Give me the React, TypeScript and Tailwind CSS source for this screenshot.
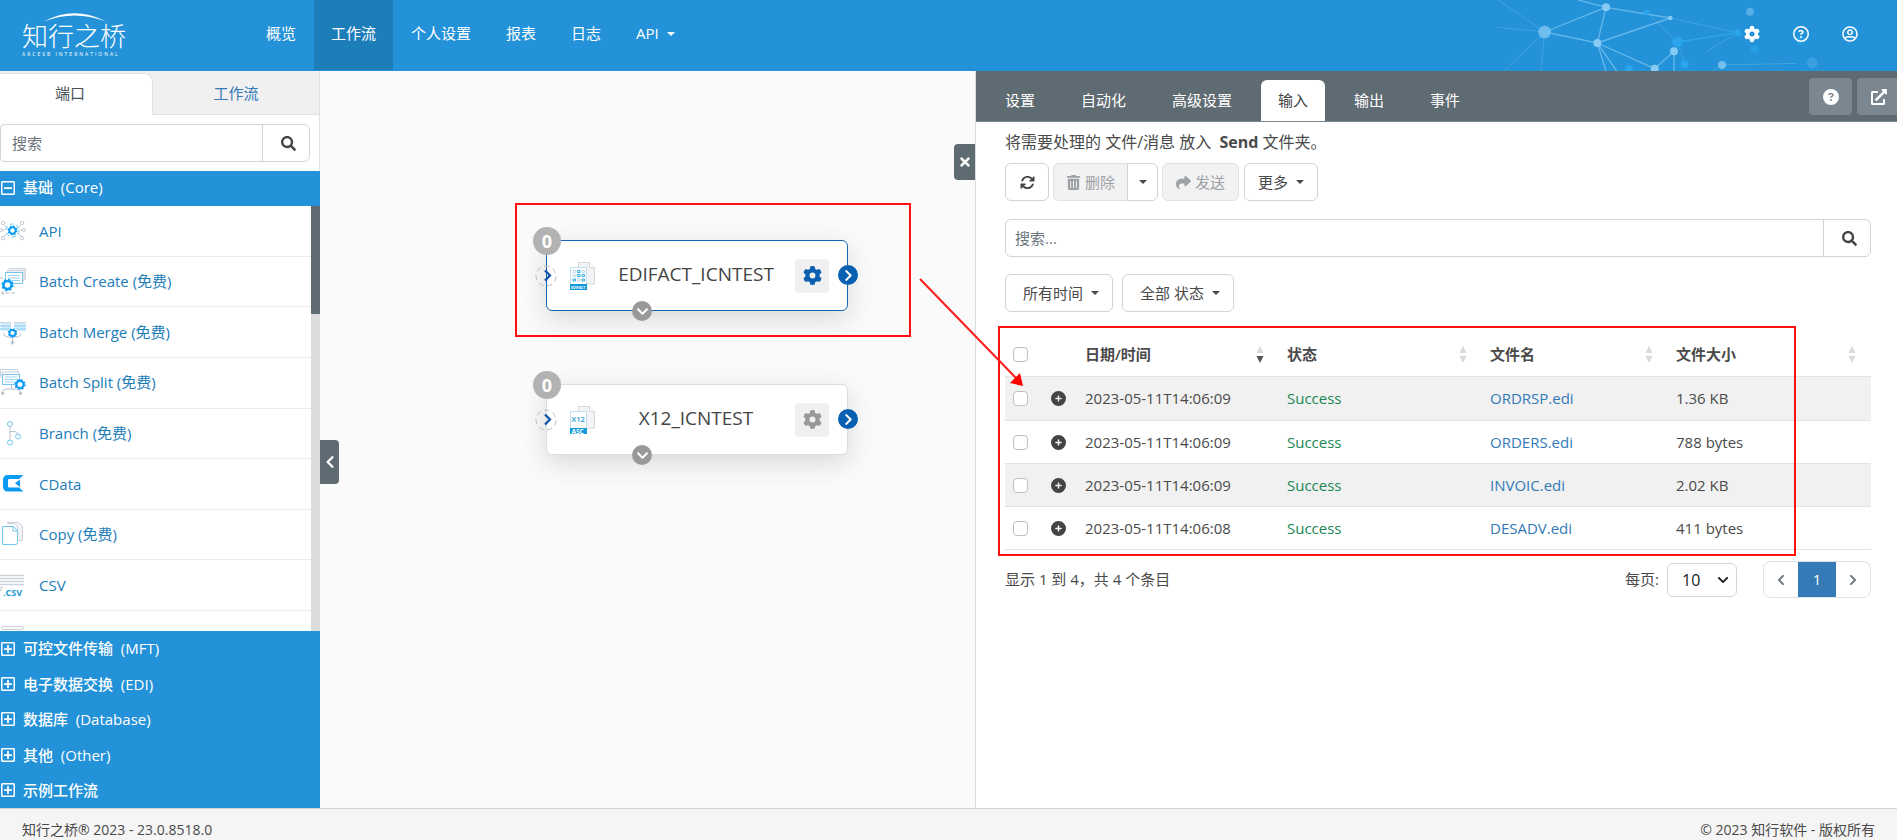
import type { ReactNode } from "react";
import {
    FaChevronDown,
    FaChevronLeft,
    FaChevronRight,
    FaExternalLinkAlt,
    FaRegMinusSquare,
    FaRegPlusSquare,
    FaRegUserCircle,
    FaSearch,
    FaTimes,
    FaTrashAlt,
} from "react-icons/fa";
import { FaArrowsRotate, FaCirclePlus, FaCircleQuestion, FaGear, FaRegCircleQuestion, FaShare } from "react-icons/fa6";

const NAV = ["概览", "工作流", "个人设置", "报表", "日志"];
const TABS = ["设置", "自动化", "高级设置", "输入", "输出", "事件"];
const GROUPS = ["可控文件传输 (MFT)", "电子数据交换 (EDI)", "数据库 (Database)", "其他 (Other)", "示例工作流"];

const FILES = [
    { time: "2023-05-11T14:06:09", status: "Success", name: "ORDRSP.edi", size: "1.36 KB" },
    { time: "2023-05-11T14:06:09", status: "Success", name: "ORDERS.edi", size: "788 bytes" },
    { time: "2023-05-11T14:06:09", status: "Success", name: "INVOIC.edi", size: "2.02 KB" },
    { time: "2023-05-11T14:06:08", status: "Success", name: "DESADV.edi", size: "411 bytes" },
];

// Small cog used inside the port icons
function Cog({ x, y, r }: { x: number; y: number; r: number }) {
    return (
        <g stroke="#0a9bf5" fill="none">
            <circle cx={x} cy={y} r={r} fill="#fff" strokeWidth={r * 0.6} />
            <circle cx={x} cy={y} r={r * 1.35} strokeWidth={r * 0.4} strokeDasharray={`${r * 0.53} ${r * 0.53}`} />
        </g>
    );
}

const PORTS: { name: string; icon: ReactNode }[] = [
    {
        name: "API",
        icon: (
            <>
                <g stroke="#c3ccd6" fill="none">
                    <circle cx="3" cy="6" r="1.7" />
                    <circle cx="22" cy="6" r="1.7" />
                    <circle cx="1" cy="13" r="1.5" />
                    <circle cx="24" cy="13" r="1.5" />
                    <circle cx="3" cy="21" r="1.7" />
                    <circle cx="22" cy="21" r="1.7" />
                    <path d="M4 7.5 6 10M21 7.5 19 10M2.5 13H5M22.500 13H20M4 19.500 6 17M21 19.500 19 17" />
                </g>
                <circle cx="12.500" cy="13.500" r="6.500" fill="none" stroke="#5cc3f5" strokeDasharray="4 2.800" />
                <Cog x={12.5} y={13.5} r={3.2} />
            </>
        ),
    },
    {
        name: "Batch Create (免费)",
        icon: (
            <>
                <path d="M9 1.500V0.500H25.500V11H24M7.500 4V2.500H24V12.500H22.500" fill="#f1f3f5" stroke="#ccd3db" />
                <rect x="5.500" y="4.500" width="17" height="11" fill="#fff" stroke="#7cc4ef" />
                <path d="M8 7.500h12M8 10h12M10 12.500h10" stroke="#9cd4f7" />
                <path d="M0 10h3M5 25h11M1 25h3M3 23v4" stroke="#b6c0cb" strokeDasharray="4 2" />
                <Cog x={7.5} y={17} r={4} />
            </>
        ),
    },
    {
        name: "Batch Merge (免费)",
        icon: (
            <>
                <path d="M1 4h10v8H1zM14 4h12v8H14z" fill="#d3ecfb" />
                <path d="M0 3.500h10.500v2M14.500 5.500v-2H26" fill="none" stroke="#ccd3db" />
                <path d="M0 7h11M14 7h12M0 10h9M17 10h9" stroke="#a4d8f8" strokeWidth="1.500" />
                <path d="M4 14q0 4 5 4h7q5 0 5-4M12.500 18v6" fill="none" stroke="#b6c0cb" />
                <path d="M10.500 22.500h4l-2 3.500z" fill="#a9b4c0" />
                <Cog x={12.5} y={14} r={3} />
            </>
        ),
    },
    {
        name: "Batch Split (免费)",
        icon: (
            <>
                <path d="M.5 8V.5h17V3M2 9V3h17v2" fill="none" stroke="#ccd3db" />
                <rect x="2.500" y="5.500" width="17" height="10" fill="#fff" stroke="#7cc4ef" />
                <path d="M5 8h12M5 10.500h12M5 13h10" stroke="#9cd4f7" />
                <path d="M11.500 16v4M2.500 24q0-4 5-4h8q5 0 5 4" fill="none" stroke="#b6c0cb" />
                <path d="M.7 23.500h4l-2 3zM18.500 23.500h4l-2 3z" fill="#a9b4c0" />
                <Cog x={20} y={15.5} r={3.6} />
            </>
        ),
    },
    {
        name: "Branch (免费)",
        icon: (
            <g fill="none">
                <g stroke="#6fc6ee">
                    <circle cx="10" cy="4" r="2.500" />
                    <circle cx="10" cy="22.500" r="2.500" />
                    <circle cx="18" cy="16.500" r="2.500" />
                </g>
                <path d="M10 6.500V20M10 11.500h4q3.500 0 3.500 2.500" stroke="#b6c0cb" />
            </g>
        ),
    },
    {
        name: "CData",
        icon: (
            <>
                <path d="M23.500 5H7.500C4.500 5 3 7 3 10v6c0 3 1.500 5.500 4.500 5.500h16L19 17.500H9.500c-1 0-1.500-.5-1.500-1.500v-5.500c0-1 .5-1.500 1.500-1.500H19z" fill="#0a9bf5" />
                <path d="M20 9.500v7.500l-5-3.700z" fill="#0a9bf5" />
            </>
        ),
    },
    {
        name: "Copy (免费)",
        icon: (
            <>
                <path d="M7.500 1.500h11l4 4v14h-5v-14l-3-3h-7z" fill="#f1f3f5" stroke="#ccd3db" />
                <path d="M2.500 5.500h11l4 4v12q0 2-2 2h-13z" fill="#fff" stroke="#6fc6ee" />
                <path d="M13 5.500V10h4.500" fill="none" stroke="#6fc6ee" />
            </>
        ),
    },
    {
        name: "CSV",
        icon: (
            <>
                <path d="M0 3.500h24M0 6.500h24M0 9.500h24M0 12.500h24M0 15.500h3M0 18h2" stroke="#ccd3db" strokeWidth="1.500" />
                <text x="3" y="23.500" fontSize="9" fontWeight="700" fill="#1c9ad6">.CSV</text>
            </>
        ),
    },
];

function Caret() {
    return <span className="inline-block border-x-4 border-t-4 border-x-transparent border-t-current" />;
}

function SortArrows({ down = false }: { down?: boolean }) {
    return (
        <svg width="8" height="17" viewBox="0 0 8 17">
            <path d="M4 0 7.500 7h-7z" fill="#dadada" />
            <path d="M4 17 7.500 10h-7z" fill={down ? "#555" : "#dadada"} />
        </svg>
    );
}

// Network pattern on the right end of the header
function HeaderArt() {
    return (
        <svg className="pointer-events-none absolute right-0 top-0" width="447" height="71" viewBox="0 0 1341 213">
            <g stroke="#8fd0f7" strokeWidth="4" fill="none" opacity=".6">
                <path d="M284 96 468 22 442 129 284 96M442 129 614 206 672 154V213M442 129 661 54 468 22 385 0M442 129 468 213M442 129 500 213" />
            </g>
            <g stroke="#6dbdee" strokeWidth="3" fill="none" opacity=".4">
                <path d="M284 96 145 0M284 96 142 82M284 96 162 213M284 96 273 213M661 54 862 98 770 155M816 195 1040 190M816 195 784 213M590 36 683 126 704 192M683 126 862 98" />
            </g>
            <path d="M683 126 862 98" stroke="#2ba8ee" strokeWidth="3" />
            <g fill="#2aa5ec">
                <circle cx="590" cy="37" r="8" />
                <circle cx="683" cy="126" r="16" />
                <circle cx="704" cy="193" r="12" />
                <circle cx="537" cy="208" r="12" />
                <circle cx="862" cy="98" r="11" />
                <circle cx="914" cy="148" r="12" opacity=".6" />
                <circle cx="1052" cy="121" r="14" opacity=".6" />
            </g>
            <circle cx="1087" cy="188" r="16" fill="#46a6e2" opacity=".7" />
            <g fill="#86cbf5">
                <circle cx="284" cy="96" r="19" fill="#6dbdee" />
                <circle cx="468" cy="22" r="12" />
                <circle cx="442" cy="129" r="12" />
                <circle cx="672" cy="154" r="12" />
                <circle cx="614" cy="206" r="12" />
                <circle cx="661" cy="54" r="7" />
                <circle cx="816" cy="195" r="12" opacity=".8" />
                <circle cx="900" cy="35" r="12" opacity=".5" />
            </g>
        </svg>
    );
}

function NodeIcon({ kind }: { kind: "edifact" | "x12" }) {
    return (
        <svg width="28" height="30" viewBox="0 0 28 30">
            <path d="M9.500 1.500h11l5 5v16.500h-16z" fill="#f1f3f5" stroke="#d3d9e0" />
            <path d="M20.500 1.500v5h5" fill="#fff" stroke="#d3d9e0" />
            <path d="M1.500 6.500h16V28h-16z" fill="#fff" stroke="#bfe0f3" />
            <path d="M1 23h17v6H1z" fill="#139ad8" />
            {kind === "edifact" ? (
                <>
                    <g fill="none" stroke="#31aadf">
                        <path d="M8.500 9.500h2.500v2h-2.500zM8.500 13.500h2.500v2h-2.500zM13 13.500h2.500v2H13zM4 18h2.500v2H4zM13 18h2.500v2H13z" />
                        <path d="M4 9.500h2.500v2H4zM13 9.500h2.500v2H13zM4 13.500h2.500v2H4zM8.500 18h2.500v2h-2.500z" stroke="#c9d9e5" />
                    </g>
                    <text x="2" y="27.500" fontSize="3.500" fontWeight="700" fill="#fff">EDIFACT</text>
                </>
            ) : (
                <>
                    <text x="2.500" y="17" fontSize="7.500" fontWeight="600" fill="#139ad8">X12</text>
                    <text x="2.500" y="28.500" fontSize="6.500" fontWeight="700" fill="#fff">ASC</text>
                </>
            )}
        </svg>
    );
}

function FlowNode({ title, kind, selected, className }: { title: string; kind: "edifact" | "x12"; selected?: boolean; className: string }) {
    return (
        <div
            className={`absolute left-[226px] flex h-[71px] w-[302px] items-center rounded-md border bg-white pl-[22px] pr-[18px] shadow-[0_8px_24px_rgba(60,70,80,0.18)] ${selected ? "border-[#1467b3]" : "border-[#dcdcdc]"} ${className}`}
        >
            <NodeIcon kind={kind} />
            <span className="flex-1 pb-1 pl-4 text-center text-[19px] leading-7 text-[#444]">{title}</span>
            <button aria-label={`${title} 设置`} className={`ml-4 flex size-[34px] items-center justify-center rounded-sm bg-[#f0f0f0] text-[19px] ${selected ? "text-[#0a60b0]" : "text-[#999]"}`}>
                <FaGear />
            </button>
            <span className="absolute -left-3.5 -top-3.5 flex size-7 items-center justify-center rounded-full bg-[#b2b2b2] text-lg font-bold text-white">0</span>
            <svg className="absolute -left-3 top-6" width="22" height="22" viewBox="0 0 22 22" fill="none">
                <circle cx="11" cy="11" r="10" stroke="#bdbdbd" strokeDasharray="5.500 3.500" />
                <path d="m10 5.500 5 5-5 5" stroke="#0a50a8" strokeWidth="2.200" />
            </svg>
            <span className="absolute -right-[11px] top-6 flex size-5 items-center justify-center rounded-full bg-[#0a60b0] pl-px text-[13px] text-white">
                <FaChevronRight />
            </span>
            <span className="absolute -bottom-[11px] left-[85px] flex size-5 items-center justify-center rounded-full bg-[#999] pt-px text-[13px] text-white">
                <FaChevronDown />
            </span>
        </div>
    );
}

function Header() {
    return (
        <header className="relative flex h-[71px] shrink-0 items-stretch overflow-hidden bg-[#2392d8] text-[15px] text-white">
            <HeaderArt />
            <a href="#home" className="relative ml-[22px] w-[227px] pt-[13px]">
                <svg className="block" width="106" height="9" viewBox="0 0 106 9">
                    <path d="M22 8.500Q52-8 84 8.500Q52-3.500 22 8.500z" fill="#fff" />
                </svg>
                <span className="block text-[26px] font-light leading-[29px]">知行之桥</span>
                <span className="block whitespace-nowrap text-[5px] leading-[6px] tracking-[2px]">ARCESB INTERNATIONAL</span>
            </a>
            <nav className="flex items-stretch gap-px">
                {NAV.map((item) => (
                    <a key={item} href="#nav" className={`mb-px flex items-center px-[17px] pb-[3px] ${item === "工作流" ? "bg-[#1c7db9]" : ""}`}>
                        {item}
                    </a>
                ))}
                <button className="mb-px flex items-center gap-2 px-[17px] pb-[3px]">
                    API <Caret />
                </button>
            </nav>
            <div className="relative ml-auto flex items-center gap-[33px] pb-[3px] pr-[39px] text-base">
                <button aria-label="设置"><FaGear /></button>
                <button aria-label="帮助"><FaRegCircleQuestion /></button>
                <button aria-label="用户"><FaRegUserCircle /></button>
            </div>
        </header>
    );
}

function Sidebar() {
    return (
        <aside className="flex w-80 shrink-0 flex-col bg-white">
            <div className="flex h-[44px] shrink-0 items-end border-r border-[#dee2e6] bg-[#f0f0f0] text-[15px]">
                <button className="h-[42px] w-[153px] rounded-tr-lg border-r border-t border-[#dee2e6] bg-white pb-0.5 pr-3 text-[#495057]">端口</button>
                <button className="h-[42px] flex-1 border-b border-[#dee2e6] text-[#337ab7]">工作流</button>
            </div>
            <div className="flex h-14 shrink-0 items-center border-r border-[#dee2e6] pr-[9px]">
                <div className="flex h-[38px] w-full overflow-hidden rounded-md rounded-l-sm border border-[#ced4da]">
                    <input aria-label="搜索端口" placeholder="搜索" className="min-w-0 flex-1 px-[11px] text-[15px] placeholder:text-[#6c757d]" />
                    <button aria-label="搜索" className="flex w-[47px] items-center justify-center border-l border-[#ced4da] pl-1 text-[15px] text-[#444]">
                        <FaSearch />
                    </button>
                </div>
            </div>
            <button className="flex h-[35px] shrink-0 items-center gap-[7px] bg-[#2392d8] pb-0.5 text-[15px] font-medium text-white">
                <FaRegMinusSquare className="size-4" /> <span>基础&nbsp; (Core)</span>
            </button>
            <div className="flex min-h-0 flex-1 overflow-hidden">
                <div className="min-w-0 flex-1">
                    <ul className="grid h-[405px] grid-rows-8 text-[15px] text-[#1c7db9]">
                        {PORTS.map((port) => (
                            <li key={port.name} className="border-b border-[#ececec]">
                                <a href="#port" className="flex h-full items-center gap-3">
                                    <svg width="27" height="27" viewBox="0 0 27 27" className="overflow-visible">{port.icon}</svg>
                                    {port.name}
                                </a>
                            </li>
                        ))}
                    </ul>
                    {/* top edge of the next port in the list */}
                    <svg className="mt-3.5" width="27" height="27" viewBox="0 0 27 27" fill="none" stroke="#ccd3db">
                        <rect x="1.500" y="1.500" width="22" height="3" rx="1.500" />
                        <path d="M10 4.500h8l3 3" />
                    </svg>
                </div>
                <div className="w-[9px] bg-[#dcdcdc]">
                    <div className="h-[108px] bg-[#5f6b72]" />
                </div>
            </div>
            <div className="grid h-[177px] shrink-0 grid-rows-5 bg-[#2392d8] text-[15px] font-medium text-white">
                {GROUPS.map((group) => (
                    <button key={group} className="flex items-center gap-[7px]">
                        <FaRegPlusSquare className="size-4" />
                        <span>{group.replace(" (", "\u00a0 (")}</span>
                    </button>
                ))}
            </div>
        </aside>
    );
}

function Canvas() {
    return (
        <section className="relative min-w-0 flex-[655] overflow-hidden border-r border-[#dcdcdc] bg-[#fafafa]">
            <FlowNode title="EDIFACT_ICNTEST" kind="edifact" selected className="top-[169px]" />
            <FlowNode title="X12_ICNTEST" kind="x12" className="top-[313px]" />
            <div className="absolute left-[195px] top-[132px] h-[134px] w-[396px] border-2 border-[#ff0f0f]" />
            <button aria-label="折叠" className="absolute left-0 top-[369px] flex h-11 w-[19px] items-center justify-center rounded-r-sm bg-[#5f6b72] text-sm text-white">
                <FaChevronLeft />
            </button>
            <button aria-label="关闭" className="absolute -right-px top-[73px] flex h-9 w-[22px] items-center justify-center rounded-l-sm bg-[#5f6b72] text-sm text-white">
                <FaTimes />
            </button>
        </section>
    );
}

const BTN = "flex h-[38px] items-center justify-center rounded-md border border-[#ced4da] text-[15px]";

function FileTable() {
    return (
        <table className="mt-5 w-full table-fixed border-separate border-spacing-0 text-left text-[15px] text-[#4a4a4a]">
            <colgroup>
                <col className="w-[38px]" />
                <col className="w-[34px]" />
                <col className="w-[202px]" />
                <col className="w-[203px]" />
                <col className="w-[186px]" />
                <col />
            </colgroup>
            <thead>
                <tr>
                    <th className="h-[45px] border-b border-[#dee2e6] pl-2">
                        <input type="checkbox" aria-label="全选" className="block size-[15px] appearance-none rounded border border-[#bfbfbf] bg-white" />
                    </th>
                    <th className="border-b border-[#dee2e6]" />
                    {["日期/时间", "状态", "文件名", "文件大小"].map((title, i) => (
                        <th key={title} className="border-b border-[#dee2e6] pl-2 pr-[15px] font-semibold">
                            <div className="flex items-center justify-between">
                                {title}
                                <SortArrows down={i === 0} />
                            </div>
                        </th>
                    ))}
                </tr>
            </thead>
            <tbody>
                {FILES.map((file) => (
                    <tr key={file.name} className="odd:bg-[#f1f1f1] [&>td]:h-[43px] first:[&>td]:h-11 [&>td]:border-b [&>td]:border-[#dee2e6] [&>td]:pl-2">
                        <td>
                            <input type="checkbox" aria-label={file.name} className="block size-[15px] appearance-none rounded border border-[#bfbfbf] bg-white" />
                        </td>
                        <td>
                            <button aria-label="展开" className="block text-[15px] text-[#444]"><FaCirclePlus /></button>
                        </td>
                        <td>{file.time}</td>
                        <td className="text-[#198754]">{file.status}</td>
                        <td><a href="#file" className="text-[#337ab7]">{file.name}</a></td>
                        <td>{file.size}</td>
                    </tr>
                ))}
            </tbody>
        </table>
    );
}

function Panel() {
    return (
        <section className="relative min-w-0 flex-[921] bg-white text-[#4a4a4a]">
            <div className="flex h-[51px] items-end overflow-hidden border-b border-[#7a8791] bg-[#5f6b72] pl-3 text-[15px] text-white">
                <div className="-mb-px flex gap-3">
                    {TABS.map((tab) => (
                        <button key={tab} className={`h-[42px] rounded-t-md px-[17px] pb-0.5 ${tab === "输入" ? "bg-white text-[#444]" : ""}`}>
                            {tab}
                        </button>
                    ))}
                </div>
                <div className="ml-auto -mr-[3px] flex gap-[5px] self-start pt-[7px] text-base">
                    <button aria-label="帮助" className="flex h-[37px] w-[43px] items-center justify-center rounded bg-[#7a8791]"><FaCircleQuestion /></button>
                    <button aria-label="新窗口" className="flex h-[37px] w-[43px] items-center justify-center rounded bg-[#7a8791]"><FaExternalLinkAlt /></button>
                </div>
            </div>
            <div className="pl-[29px] pr-[26px] pt-2">
                <p className="text-base leading-6">
                    将需要处理的 文件/消息 放入 &nbsp;<b>Send</b> 文件夹。
                </p>
                <div className="mt-[9px] flex">
                    <button aria-label="刷新" className={`${BTN} w-11 text-[#444]`}><FaArrowsRotate /></button>
                    <button disabled className={`${BTN} ml-1 w-[74px] gap-1 rounded-r-none border-r-0 border-[#dee2e6] bg-[#f2f2f2] text-[#9da1a6]`}><FaTrashAlt />删除</button>
                    <button aria-label="删除选项" className={`${BTN} w-[31px] rounded-l-none`}><Caret /></button>
                    <button disabled className={`${BTN} ml-1 w-[77px] gap-1 border-[#dee2e6] bg-[#f2f2f2] text-[#9da1a6]`}><FaShare />发送</button>
                    <button className={`${BTN} ml-[5px] w-[74px] gap-2`}>更多 <Caret /></button>
                </div>
                <div className="mt-[18px] flex h-[38px] overflow-hidden rounded-md border border-[#ced4da]">
                    <input aria-label="搜索文件" placeholder="搜索..." className="min-w-0 flex-1 px-[9px] text-[15px] placeholder:text-[#6c757d]" />
                    <button aria-label="搜索" className="flex w-[47px] items-center justify-center border-l border-[#ced4da] pl-1 text-[15px] text-[#444]">
                        <FaSearch />
                    </button>
                </div>
                <div className="mt-[17px] flex gap-[9px]">
                    <button className={`${BTN} w-[108px] gap-2 pl-1`}>所有时间 <Caret /></button>
                    <button className={`${BTN} w-[112px] gap-2 pl-1`}>全部 状态 <Caret /></button>
                </div>
                <FileTable />
                <div className="mt-[11px] flex items-center text-[15px]">
                    <span>显示 1 到 4，共 4 个条目</span>
                    <label htmlFor="per-page" className="ml-auto mr-2">每页:</label>
                    <div className="relative">
                        <select id="per-page" className="h-[34px] w-[70px] appearance-none rounded-md border border-[#ced4da] bg-white pl-3.5 text-base text-[#212529]">
                            <option>10</option>
                        </select>
                        <FaChevronDown className="pointer-events-none absolute right-2 top-[11px] size-3 text-[#212529]" />
                    </div>
                    <div className="ml-[26px] flex h-[37px] overflow-hidden rounded-lg border border-[#dee2e6] text-[#6c757d]">
                        <button aria-label="上一页" className="flex w-[34px] items-center justify-center text-xs"><FaChevronLeft /></button>
                        <button className="-my-px w-[38px] bg-[#337ab7] text-white">1</button>
                        <button aria-label="下一页" className="flex w-[34px] items-center justify-center text-xs"><FaChevronRight /></button>
                    </div>
                </div>
            </div>
            {/* callout frame and arrow */}
            <div className="pointer-events-none absolute left-[22px] right-[101px] top-[255px] h-[230px] border-2 border-[#ff0f0f]" />
            <svg className="pointer-events-none absolute -left-[60px] top-[200px]" width="120" height="125" viewBox="0 0 120 125">
                <path d="M4 8 100 107" stroke="#ff1a1a" strokeWidth="2" />
                <path d="m107 115-13-3 10-10z" fill="#ff0000" />
            </svg>
        </section>
    );
}

export default function App() {
    return (
        <div className="flex h-screen flex-col overflow-hidden font-['Open_Sans','Noto_Sans_CJK_SC',sans-serif]">
            <Header />
            <main className="flex min-h-0 flex-1">
                <Sidebar />
                <Canvas />
                <Panel />
            </main>
            <footer className="flex h-8 shrink-0 justify-between overflow-hidden border-t border-[#d3d3d3] bg-[#f5f5f5] px-[22px] pt-[10px] text-sm leading-[22px] text-[#4a4a4a]">
                <span>知行之桥® 2023 - 23.0.8518.0</span>
                <span>© 2023 知行软件 - 版权所有</span>
            </footer>
        </div>
    );
}
